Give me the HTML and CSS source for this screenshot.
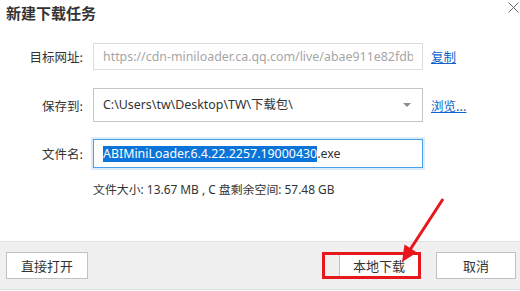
FILE: index.html
```html
<!DOCTYPE html>
<html lang="zh-CN">
<head>
<meta charset="utf-8">
<link rel="stylesheet" href="styles.css">
</head>
<body>
<div class="dialog">
  <div class="titlebar">
    <div class="title">新建下载任务</div>
    <svg class="close" width="11" height="11" viewBox="0 0 11 11"><path d="M0.5 0.5 L10.5 10.5 M10.5 0.5 L0.5 10.5" stroke="#666" stroke-width="1" fill="none"/></svg>
  </div>
  <div class="form">
    <div class="row r1">
      <label class="lbl">目标网址:</label>
      <div class="field disabled"><span class="val">https://cdn-miniloader.ca.qq.com/live/abae911e82fdb</span></div>
      <a class="link">复制</a>
    </div>
    <div class="row r2">
      <label class="lbl">保存到:</label>
      <div class="field select"><span class="val">C:\Users\tw\Desktop\TW\下载包\</span><span class="caret"></span></div>
      <a class="link">浏览...</a>
    </div>
    <div class="row r3">
      <label class="lbl">文件名:</label>
      <div class="field focus"><span class="val"><span class="sel">ABIMiniLoader.6.4.22.2257.19000430</span>.exe</span></div>
    </div>
    <div class="info">文件大小: 13.67 MB , C 盘剩余空间: 57.48 GB</div>
  </div>
  <div class="footer">
    <button class="btn">直接打开</button>
    <div class="right">
      <button class="btn">本地下载</button>
      <button class="btn">取消</button>
    </div>
  </div>
  <div class="redbox"></div>
  <svg class="arrow" width="520" height="291" viewBox="0 0 520 291">
    <line x1="443" y1="199" x2="410.5" y2="249" stroke="#e8161d" stroke-width="3"/>
    <polygon points="402,262 404.5,244.5 417,252.5" fill="#e8161d"/>
  </svg>
</div>
</body>
</html>
```
FILE: styles.css
```css
* { box-sizing: border-box; }
html, body { margin: 0; padding: 0; background: #fff; }
body {
  font-family: "Noto Sans", "Noto Sans CJK SC", sans-serif;
  font-size: 12px;
  color: #333;
}
.dialog {
  position: relative;
  width: 520px;
  height: 291px;
  display: flex;
  flex-direction: column;
  overflow: hidden;
}
.titlebar {
  height: 28px;
  display: flex;
  justify-content: space-between;
  align-items: flex-start;
  padding: 3px 1px 0 6px;
}
.title {
  font-family: "Noto Sans CJK SC", sans-serif;
  font-weight: bold;
  font-size: 15px;
  line-height: 19px;
  color: #333;
}
.close { margin-top: -1px; }
.form {
  padding-top: 15px;
  display: flex;
  flex-direction: column;
}
.row {
  display: flex;
  align-items: center;
}
.r1 { height: 27px; }
.r2 { height: 34px; margin-top: 18px; }
.r3 { height: 29px; margin-top: 17px; }
.lbl {
  width: 83px;
  text-align: right;
  font-family: "Noto Sans CJK SC", sans-serif;
  font-size: 12.5px;
  color: #333;
  margin-right: 10px;
}
.field {
  width: 330px;
  height: 100%;
  border: 1px solid #c6c6c6;
  background: #fff;
  display: flex;
  align-items: center;
  padding: 0 9px;
  white-space: nowrap;
  position: relative;
}
.val {
  display: block;
  flex: 1 1 0;
  font-size: 12.4px;
  line-height: 16px;
  min-width: 0;
  overflow: hidden;
}
.disabled { border-color: #dcdcdc; }
.disabled .val { color: #a6a6a6; }
.select .val { color: #333; }
.caret {
  position: absolute;
  right: 11px;
  top: 14px;
  width: 0;
  height: 0;
  border-left: 4px solid transparent;
  border-right: 4px solid transparent;
  border-top: 4px solid #8c8c8c;
}
.focus {
  border-color: #4a9fe8;
  box-shadow: 0 0 0 2px #dcecfb;
}
.sel {
  background: #0a74d9;
  color: #fff;
  padding: 1px 0;
}
.link {
  margin-left: 8px;
  color: #0d63c9;
  text-decoration: underline;
  font-family: "Noto Sans CJK SC", sans-serif;
  font-size: 12.5px;
}
.info {
  margin-top: 13px;
  padding-left: 93px;
  line-height: 16px;
  font-family: "Noto Sans", "Noto Sans CJK SC", sans-serif;
  font-size: 11.9px;
  color: #333;
}
.footer {
  margin-top: auto;
  margin-bottom: 1px;
  height: 49px;
  background: #f0f0f0;
  border-top: 1px solid #e2e2e2;
  border-bottom: 1px solid #dedede;
  display: flex;
  justify-content: space-between;
  align-items: flex-start;
  padding: 10px 4px 0 6px;
}
.right { display: flex; gap: 17px; }
.btn {
  width: 82px;
  height: 27px;
  border: 1px solid #c2c2c2;
  background: #fff;
  font-family: "Noto Sans CJK SC", sans-serif;
  font-size: 13px;
  color: #333;
  padding: 0;
}
.right .btn { width: 80px; }
.redbox {
  position: absolute;
  left: 322px;
  top: 252px;
  width: 99px;
  height: 27px;
  border: 3px solid #e8161d;
}
.arrow {
  position: absolute;
  left: 0;
  top: 0;
  pointer-events: none;
}
```
